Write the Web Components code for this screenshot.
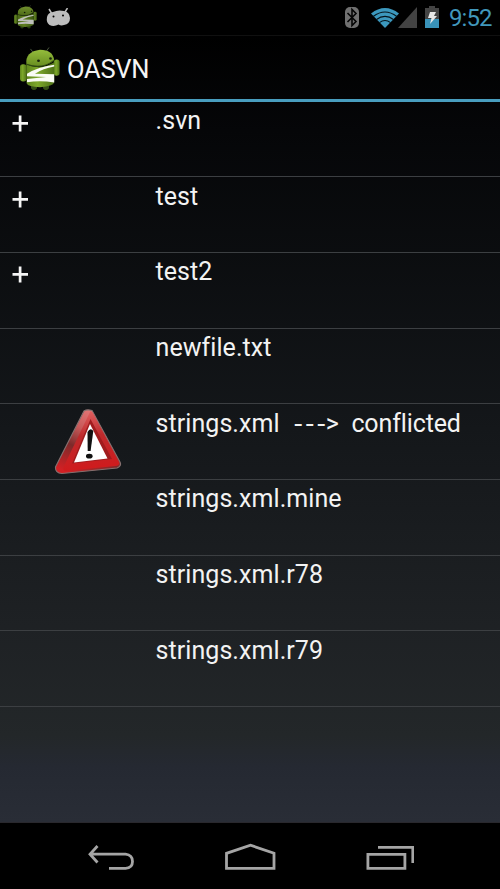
<!DOCTYPE html>
<html lang="en"><head><meta charset="utf-8"><title>OASVN</title>
<style>body{margin:0;background:#000;font-family:Roboto,"Noto Sans",sans-serif}</style></head>
<body><oa-screen></oa-screen>
<script>
const define=(name,html)=>{
  const t=document.createElement('template');t.innerHTML=html;
  customElements.define(name,class extends HTMLElement{
    constructor(){super();this.attachShadow({mode:'open'}).append(t.content.cloneNode(true));}
  });
};
define('oa-logo',`<style>:host{display:block}svg{display:block;width:100%;height:100%}</style>
<svg viewBox="0 0 40 46" preserveAspectRatio="none">
<defs><linearGradient id="g" x1="0" x2="1"><stop offset="0" stop-color="#5f861d"/><stop offset=".4" stop-color="#7da82a"/><stop offset="1" stop-color="#4f7218"/></linearGradient>
<linearGradient id="h" x1="0" x2="0" y1="0" y2="1"><stop offset="0" stop-color="#94bc3c"/><stop offset="1" stop-color="#678d20"/></linearGradient></defs>
<path d="M10.5 2l3.5 5M29 .5l-3 4.5" stroke="#4c5840" stroke-width="1"/>
<rect x="0" y="18" width="6.6" height="18" rx="3" fill="url(#g)"/><rect x="33.8" y="13" width="5.8" height="17" rx="2.8" fill="url(#g)"/>
<path d="M11 38h6v5q-3 4-6 0zM23 38h6v5q-3 4-6 0z" fill="#344e14"/>
<path d="M6.4 18Q20 25 34.2 16V37Q33 41 20 42Q8 42 6.6 38z" fill="url(#g)"/>
<path d="M6.4 18Q5 5 20 3Q33 3 34.2 14Q22 24 6.4 18z" fill="url(#h)"/>
<path d="M6.6 18Q22 24 34 14" fill="none" stroke="#314b12" stroke-width="1.1"/>
<circle cx="18.5" cy="14.4" r="1.4" fill="#17220d"/><circle cx="30.5" cy="12" r="1.3" fill="#17220d"/>
<path d="M34.2 18.5Q17 21 7 28V30.5L26 31.3L7 33.5V36.8Q20 34.5 34.2 37V28.5L15 28Q23 22.5 34.2 20.5z" fill="#fafcf5"/></svg>`);
define('oa-status',`<style>:host{display:flex;height:36px;box-sizing:border-box;background:#000;border-bottom:1px solid #101010;align-items:flex-start}
oa-logo{width:23px;height:24px;margin:5px 0 0 14px;opacity:.76}svg{display:block;flex:none}.m{margin:8px 0 0 9px}.b{margin:7px 0 0 auto}
.w{margin:8px 0 0 12px}.s{margin:7px 0 0 -1px}.p{margin:6px 0 0 8px}time{font-size:24px;line-height:36px;color:#4197bb;margin:0 8px 0 10px;width:43px;white-space:nowrap;letter-spacing:-.9px}</style>
<oa-logo></oa-logo>
<svg class="m" width="25" height="19" viewBox="0 0 25 19"><path d="M3 1l3 5M21.5 0l-2.5 4" stroke="#bebebe" stroke-width="1.5"/><path d="M1 9Q2 4.5 7 4Q12 1.5 18 3Q23.5 4 24 10Q24 16 18 17Q15 18 12.5 16.5Q8 19 3.5 17Q0 14.5 1 9z" fill="#bebebe"/><circle cx="7.5" cy="8.5" r="1"/><circle cx="17" cy="7.5" r="1"/></svg>
<svg class="b" width="14" height="21" viewBox="0 0 14 21"><rect width="14" height="21" rx="5" fill="#707070"/><path d="M2.5 6l8.5 8.5-4 4v-16l4 4L2.5 15" fill="none" stroke="#050505" stroke-width="1.6"/></svg>
<svg class="w" width="28" height="20" viewBox="0 0 28 20"><path d="M0 5.5Q14-5.5 28 5.5L14 20z" fill="#3c98bd"/><path d="M2.2 8.5Q14-.5 25.8 8.5M5.2 11.7Q14 5 22.8 11.7M8.4 14.6Q14 10.3 19.6 14.6" fill="none" stroke="#06141b" stroke-width="1.1"/></svg>
<svg class="s" width="19" height="21" viewBox="0 0 19 21"><path d="M19 0v21H0z" fill="#434343"/></svg>
<svg class="p" width="14" height="22" viewBox="0 0 14 22"><path d="M4 0h6v2h4v11H0V2h4z" fill="#444"/><path d="M0 13h14v9H0z" fill="#3992b8"/><path d="M5 6h6L9 10h3L5 18l1.5-6H3z" fill="#e8e8e8"/></svg>
<time>9:52</time>`);
define('oa-bar',`<style>:host{display:flex;height:65.5px;box-sizing:border-box;padding:10.5px 0 0 20px;border-bottom:3px solid #489dbe;}
oa-logo{width:40px;height:44px}h1{margin:0 0 0 7px;font-weight:400;font-size:25.5px;line-height:45px;color:#f5f5f5;white-space:nowrap;letter-spacing:-.25px}</style><oa-logo></oa-logo><h1><slot></slot></h1>`);
define('oa-warning',`<style>:host{display:block;width:68px;height:66px}svg{display:block}</style>
<svg width="68" height="66" viewBox="0 0 68 66"><defs><linearGradient id="r" x1=".5" y1="0" x2=".6" y2="1"><stop offset="0" stop-color="#e06060"/><stop offset=".4" stop-color="#bd2a2c"/><stop offset="1" stop-color="#d11a1c"/></linearGradient>
<linearGradient id="l" x1=".7" y1="0" x2=".2" y2="1"><stop offset="0" stop-color="#e87c7c"/><stop offset=".35" stop-color="#c85a5a"/><stop offset=".62" stop-color="#7d2a2a"/><stop offset="1" stop-color="#d32024"/></linearGradient></defs>
<path d="M30 2Q33 0 38 1.5L66 53Q68 57 63 59L8 64.5Q1 64 1.5 58z" fill="url(#l)" stroke="#85706f" stroke-width="1.1"/>
<path d="M36 3Q37 1 39 4L65 53Q66 56 62 57L11 62Q8 61 10 57z" fill="url(#r)"/>
<path d="M36.5 10L58 50L18 54.5z" fill="#a01c1e"/><path d="M36 15L53.5 49.5L20 53.5z" fill="#fff"/>
<path d="M33.5 23Q36.5 18 39.3 22L36.6 42H33.7z" fill="#111"/><ellipse cx="35.3" cy="47.2" rx="3.3" ry="2.4" fill="#111"/></svg>`);
define('oa-row',`<style>:host{display:grid;grid-template-columns:54px 101.5px 1fr;height:75.7px;box-sizing:border-box;border-bottom:1.5px solid #3c3f42;color:#f3f3f3}
.e{padding:10.5px 0 0 12px}.e svg{display:none}:host([dir-node]) .e svg{display:block}.i{padding-top:4.5px}.t{font-size:25px;line-height:30px;padding-top:4.5px;white-space:pre;letter-spacing:.07px}
::slotted(.dashes){font-family:"Liberation Mono",monospace;letter-spacing:-3.5px;margin:0 .5px 0 -1.5px}::slotted(.state){letter-spacing:-.12px}</style>
<div class="e"><svg width="16" height="20" viewBox="0 0 16 20"><path d="M8.1 3.5v16M.5 11.4h15.5" stroke="#f5f5f5" stroke-width="2.7"/></svg></div><div class="i"><slot name="icon"></slot></div><div class="t"><slot></slot></div>`);
define('oa-nav',`<style>:host{display:flex;height:67px;box-sizing:border-box;background:#000;border-top:1px solid #29282d;justify-content:space-between;padding:20px 86px 0 87px}svg{display:block;fill:none;stroke:#a5a5a5;stroke-width:2.8}</style>
<svg width="48" height="32" viewBox="0 0 48 32"><path d="M10.5 3L3 11.2L10.5 19.5M3 11.2H38.5Q45.5 12 45.5 18.5T38.5 25.3H22"/></svg>
<svg width="52" height="32" viewBox="0 0 52 32"><path d="M2.5 25.3V10.3L26.5 2.2L50 10.3V25.3z"/></svg>
<svg width="50" height="32" viewBox="0 0 50 32"><path d="M3.9 11.3h37v14h-37zM14 4.3H48.8V20"/></svg>`);
define('oa-screen',`<style>:host{display:flex;flex-direction:column;width:500px;height:889px;overflow:hidden;background:#000}
main{flex:1;background:linear-gradient(#000,#050608 12%,#14171a 50%,#1e2124 75%,#232729 89%,#252932 93%,#292d36)}</style>
<oa-status></oa-status><main><oa-bar>OASVN</oa-bar>
<oa-row dir-node>.svn</oa-row><oa-row dir-node>test</oa-row><oa-row dir-node>test2</oa-row><oa-row>newfile.txt</oa-row>
<oa-row><oa-warning slot="icon"></oa-warning>strings.xml  <span class="dashes">---</span>&gt;  <span class="state">conflicted</span></oa-row><oa-row>strings.xml.mine</oa-row><oa-row>strings.xml.r78</oa-row><oa-row>strings.xml.r79</oa-row></main><oa-nav></oa-nav>`);
</script></body></html>
